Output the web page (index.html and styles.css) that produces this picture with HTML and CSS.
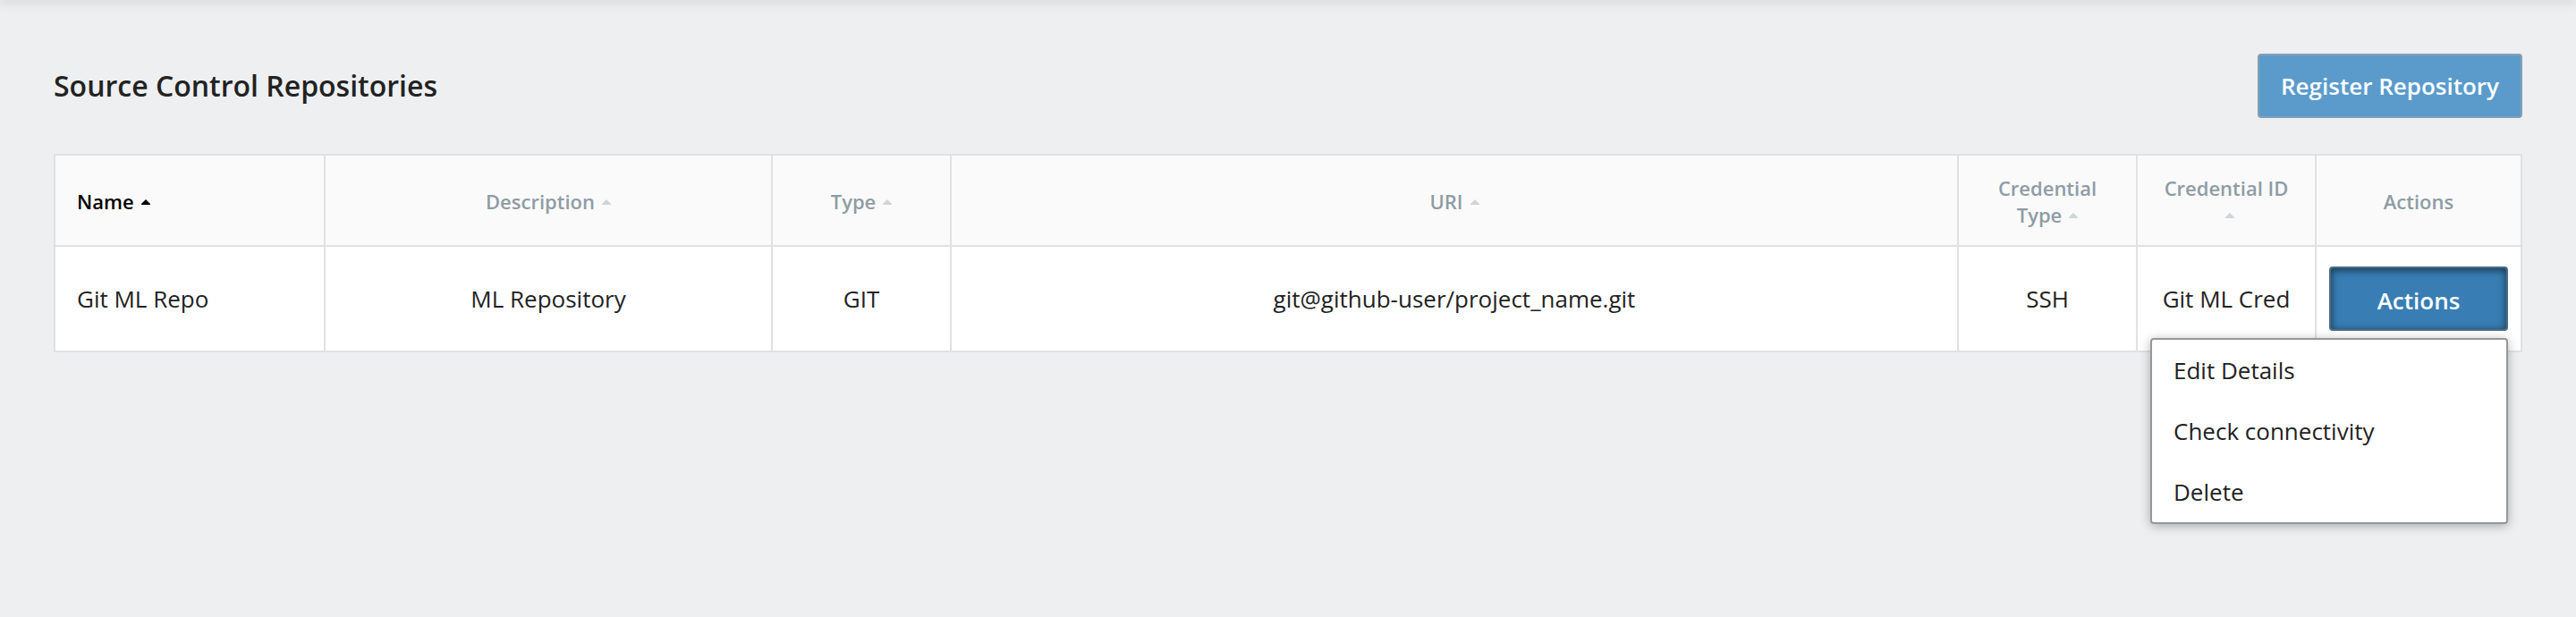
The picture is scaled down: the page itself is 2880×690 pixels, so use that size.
FILE: index.html
```html
<!DOCTYPE html>
<html lang="en">
<head>
<meta charset="utf-8">
<title>Source Control Repositories</title>
<link rel="stylesheet" href="styles.css">
</head>
<body>
<div class="topbar-edge"></div>
<main class="page">
  <header class="page-header">
    <h1 class="page-title">Source Control Repositories</h1>
    <button type="button" class="btn btn-primary">Register Repository</button>
  </header>
  <table class="repos">
    <colgroup>
      <col class="col-name">
      <col class="col-description">
      <col class="col-short">
      <col>
      <col class="col-short">
      <col class="col-short">
      <col class="col-actions">
    </colgroup>
    <thead>
      <tr>
        <th scope="col" class="left" aria-sort="ascending"><button type="button" class="sort sort-active">Name<svg class="arrow" viewBox="0 0 10 6" aria-hidden="true"><path d="M0 6V5L5 0L10 5V6Z"/></svg></button></th>
        <th scope="col"><button type="button" class="sort">Description<svg class="arrow" viewBox="0 0 10 6" aria-hidden="true"><path d="M0 6V5L5 0L10 5V6Z"/></svg></button></th>
        <th scope="col"><button type="button" class="sort">Type<svg class="arrow" viewBox="0 0 10 6" aria-hidden="true"><path d="M0 6V5L5 0L10 5V6Z"/></svg></button></th>
        <th scope="col"><button type="button" class="sort">URI<svg class="arrow" viewBox="0 0 10 6" aria-hidden="true"><path d="M0 6V5L5 0L10 5V6Z"/></svg></button></th>
        <th scope="col"><button type="button" class="sort">Credential Type<svg class="arrow" viewBox="0 0 10 6" aria-hidden="true"><path d="M0 6V5L5 0L10 5V6Z"/></svg></button></th>
        <th scope="col"><button type="button" class="sort">Credential ID<svg class="arrow" viewBox="0 0 10 6" aria-hidden="true"><path d="M0 6V5L5 0L10 5V6Z"/></svg></button></th>
        <th scope="col">Actions</th>
      </tr>
    </thead>
    <tbody>
      <tr>
        <td class="left">Git ML Repo</td>
        <td>ML Repository</td>
        <td>GIT</td>
        <td>git@github-user/project_name.git</td>
        <td>SSH</td>
        <td>Git ML Cred</td>
        <td class="actions-cell">
          <div class="dropdown">
            <button type="button" class="btn btn-open" aria-haspopup="menu" aria-expanded="true">Actions</button>
            <div class="menu" role="menu">
              <button type="button" class="menu-item" role="menuitem">Edit Details</button>
              <button type="button" class="menu-item" role="menuitem">Check connectivity</button>
              <button type="button" class="menu-item" role="menuitem">Delete</button>
            </div>
          </div>
        </td>
      </tr>
    </tbody>
  </table>
</main>
</body>
</html>
```
FILE: styles.css
```css
* {
  box-sizing: border-box;
}

body {
  min-height: 100vh;
  margin: 0;
  background: #edeff1;
  color: #222;
  font-family: "Open Sans", "Noto Sans", sans-serif;
  font-size: 26px;
  line-height: 36px;
}

button {
  font: inherit;
  color: inherit;
  cursor: pointer;
}

.topbar-edge {
  height: 0;
  box-shadow: 0 0 12px 1px rgba(0, 0, 0, 0.4);
}

.page {
  padding: 60px;
}

.page-header {
  display: flex;
  align-items: center;
  justify-content: space-between;
  margin-bottom: 40px;
}

.page-title {
  margin: 0;
  font-size: 32px;
  font-weight: 600;
  line-height: 44px;
}

.btn {
  padding: 16px 24px;
  border: 2px solid;
  border-radius: 4px;
  color: #fff;
  font-weight: 600;
}

.btn-primary {
  background: #5a9bcc;
  border-color: #879fb7;
}

.btn-open {
  display: block;
  width: 100%;
  padding-top: 18px;
  padding-bottom: 14px;
  background: #387eb4;
  border-color: #4c6c87;
  box-shadow: inset 0 2px 10px rgba(0, 0, 0, 0.6);
}

.repos {
  width: 100%;
  table-layout: fixed;
  border-spacing: 0;
  border-right: 2px solid #e1e1e1;
  border-bottom: 2px solid #e1e1e1;
}

.col-name {
  width: 302px;
}

.col-description {
  width: 500px;
}

.col-short {
  width: 200px;
}

.col-actions {
  width: 230px;
}

.repos th,
.repos td {
  padding: 20px 24px;
  border-top: 2px solid #e1e1e1;
  border-left: 2px solid #e1e1e1;
  text-align: center;
  vertical-align: middle;
}

.repos th {
  padding-top: 21px;
  padding-bottom: 19px;
  background: #fafafa;
  color: #8f9ca5;
  font-size: 22px;
  font-weight: 600;
  line-height: 30px;
}

.repos td {
  background: #fff;
}

.repos .left {
  text-align: left;
}

.repos .actions-cell {
  padding: 22px 14px;
}

.sort {
  padding: 0;
  border: 0;
  background: none;
}

.sort-active {
  color: #000;
}

.arrow {
  width: 10px;
  height: 6px;
  margin-left: 8px;
  vertical-align: 5px;
  fill: #cfd5d9;
}

.sort-active .arrow {
  fill: #000;
}

.dropdown {
  position: relative;
}

.menu {
  position: absolute;
  top: calc(100% + 8px);
  right: 0;
  width: 400px;
  border: 2px solid #979797;
  border-radius: 4px;
  background: #fff;
  box-shadow: 0 2px 12px rgba(0, 0, 0, 0.3);
}

.menu-item {
  display: block;
  width: 100%;
  padding: 16px 24px;
  border: 0;
  background: none;
  text-align: left;
}
```
